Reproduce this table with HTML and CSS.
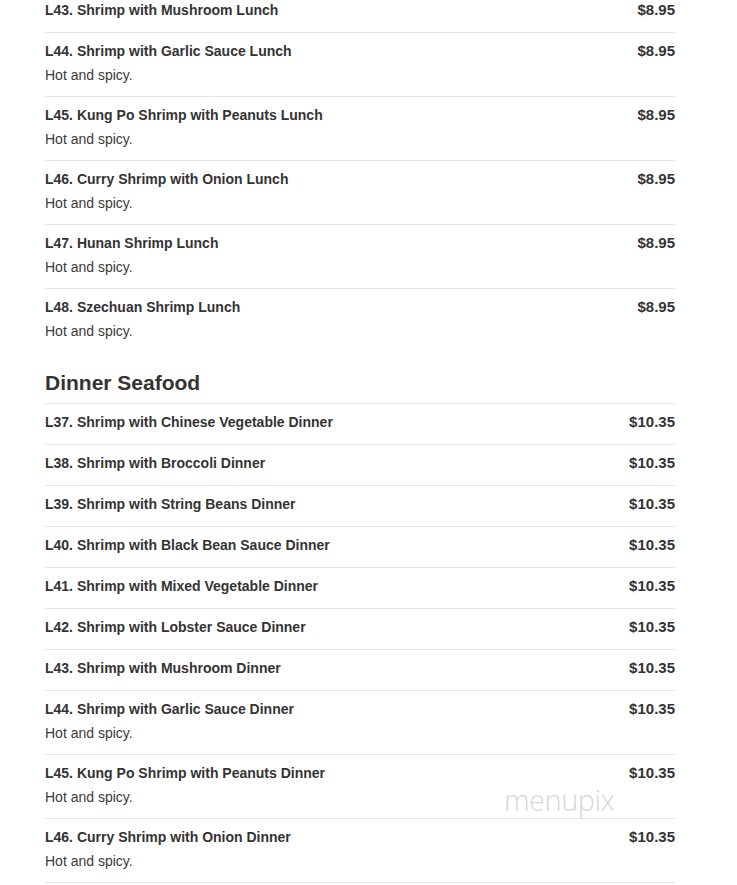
FILE: index.html
```html
<!DOCTYPE html>
<html>
<head>
<meta charset="utf-8">
<link rel="stylesheet" href="styles.css">
</head>
<body>
<div class="menu">
  <div class="item first"><div class="info"><div class="name">L43. Shrimp with Mushroom Lunch</div></div><div class="price">$8.95</div></div>
  <div class="item"><div class="info"><div class="name">L44. Shrimp with Garlic Sauce Lunch</div><div class="desc">Hot and spicy.</div></div><div class="price">$8.95</div></div>
  <div class="item"><div class="info"><div class="name">L45. Kung Po Shrimp with Peanuts Lunch</div><div class="desc">Hot and spicy.</div></div><div class="price">$8.95</div></div>
  <div class="item"><div class="info"><div class="name">L46. Curry Shrimp with Onion Lunch</div><div class="desc">Hot and spicy.</div></div><div class="price">$8.95</div></div>
  <div class="item"><div class="info"><div class="name">L47. Hunan Shrimp Lunch</div><div class="desc">Hot and spicy.</div></div><div class="price">$8.95</div></div>
  <div class="item"><div class="info"><div class="name">L48. Szechuan Shrimp Lunch</div><div class="desc">Hot and spicy.</div></div><div class="price">$8.95</div></div>

  <h3 class="section">Dinner Seafood</h3>
  <div class="item"><div class="info"><div class="name">L37. Shrimp with Chinese Vegetable Dinner</div></div><div class="price">$10.35</div></div>
  <div class="item"><div class="info"><div class="name">L38. Shrimp with Broccoli Dinner</div></div><div class="price">$10.35</div></div>
  <div class="item"><div class="info"><div class="name">L39. Shrimp with String Beans Dinner</div></div><div class="price">$10.35</div></div>
  <div class="item"><div class="info"><div class="name">L40. Shrimp with Black Bean Sauce Dinner</div></div><div class="price">$10.35</div></div>
  <div class="item"><div class="info"><div class="name">L41. Shrimp with Mixed Vegetable Dinner</div></div><div class="price">$10.35</div></div>
  <div class="item"><div class="info"><div class="name">L42. Shrimp with Lobster Sauce Dinner</div></div><div class="price">$10.35</div></div>
  <div class="item"><div class="info"><div class="name">L43. Shrimp with Mushroom Dinner</div></div><div class="price">$10.35</div></div>
  <div class="item"><div class="info"><div class="name">L44. Shrimp with Garlic Sauce Dinner</div><div class="desc">Hot and spicy.</div></div><div class="price">$10.35</div></div>
  <div class="item"><div class="info"><div class="name">L45. Kung Po Shrimp with Peanuts Dinner</div><div class="desc">Hot and spicy.</div></div><div class="price">$10.35</div></div>
  <div class="item"><div class="info"><div class="name">L46. Curry Shrimp with Onion Dinner</div><div class="desc">Hot and spicy.</div></div><div class="price">$10.35</div></div>
  <div class="item-end"></div>
</div>
<div class="watermark">menupix</div>
</body>
</html>
```

FILE: styles.css
```css
html, body {
  margin: 0;
  padding: 0;
  background: #fff;
}
body {
  font-family: "Liberation Sans", Arial, sans-serif;
  color: #333;
  position: relative;
  min-height: 885px;
  overflow: hidden;
}
.menu {
  margin-left: 45px;
  width: 630px;
}
.item {
  display: flex;
  justify-content: space-between;
  align-items: flex-start;
  border-top: 1px solid #e4e4e4;
  padding: 8px 0 12px;
}
.item.first {
  border-top: none;
  padding-top: 0;
}
.item-end {
  border-top: 1px solid #e4e4e4;
}
.name {
  font-size: 14px;
  font-weight: bold;
  line-height: 20px;
}
.desc {
  font-size: 14px;
  line-height: 20px;
  margin-top: 4px;
  margin-bottom: -1px;
  color: #3a3a3a;
}
.price {
  font-size: 15px;
  font-weight: bold;
  line-height: 20px;
}
.section {
  font-size: 21px;
  font-weight: bold;
  line-height: 24px;
  margin: 19px 0 8px;
}
.watermark {
  position: absolute;
  left: 504px;
  top: 782px;
  font-family: "Open Sans", sans-serif;
  font-weight: 300;
  font-size: 29px;
  letter-spacing: -0.5px;
  color: #d8d8d8;
  line-height: 36px;
}
```
